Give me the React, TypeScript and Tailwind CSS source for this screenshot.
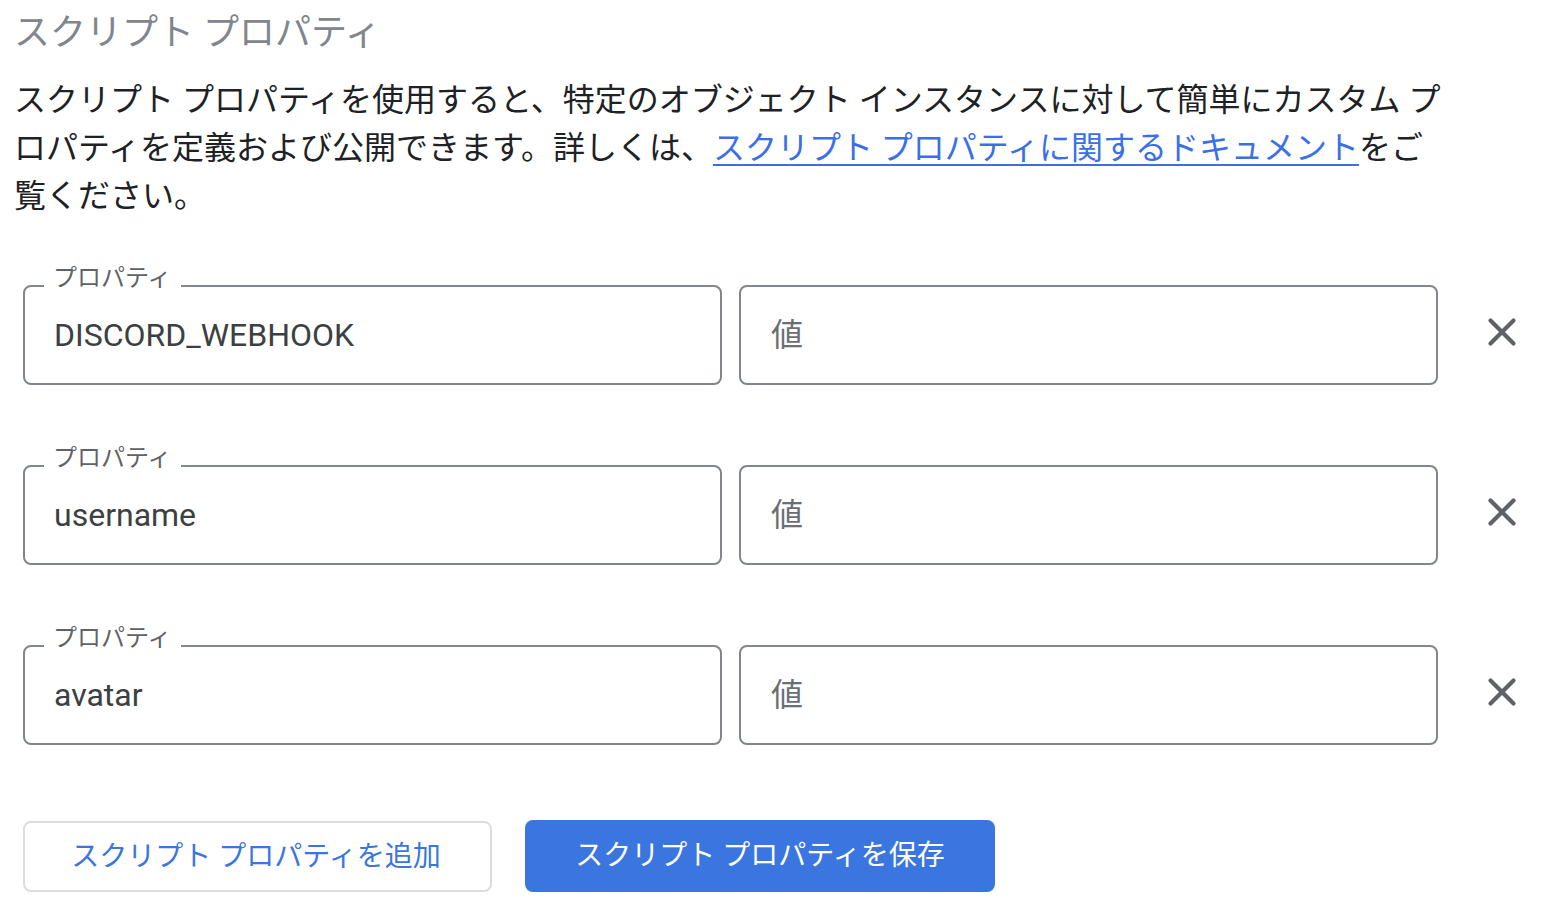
import { X } from "lucide-react";

const rows = ["DISCORD_WEBHOOK", "username", "avatar"];

const PropertyRow = ({ name }: { name: string }) => {
  return (
    <div className="flex items-center">
      <div className="relative w-[699px] h-[100px] border-2 border-[#80868b] rounded-[8px] flex items-center pl-[29px]">
        <span className="absolute top-[-21px] left-[19px] px-[9px] bg-white text-[24px] leading-[24px] text-[#5f6368]">
          プロパティ
        </span>
        <span className="text-[32px] text-[#3c4043]">{name}</span>
      </div>
      <div className="ml-[17px] w-[699px] h-[100px] border-2 border-[#80868b] rounded-[8px] flex items-center pl-[30px]">
        <span className="text-[32px] text-[#6b6f74]">値</span>
      </div>
      <button className="ml-[36px] w-[56px] h-[56px] flex items-center justify-center text-[#5f6368] mt-[-6px]">
        <X size={46} strokeWidth={2.2} />
      </button>
    </div>
  );
};

export default function App() {
  return (
    <div
      className="bg-white min-h-[924px] pl-[14px] pt-[11px]"
      style={{ fontFamily: 'Roboto, "Noto Sans CJK JP", sans-serif' }}
    >
      <h1 className="text-[36px] leading-[44px] text-[#80868b] font-normal">
        スクリプト プロパティ
      </h1>
      <p className="mt-[21px] w-[1434px] text-[32px] leading-[48px] text-[#202124]">
        スクリプト プロパティを使用すると、特定のオブジェクト インスタンスに対して簡単にカスタム プロパティを定義および公開できます。詳しくは、
        <a href="#" className="text-[#3b6fe6] underline decoration-2 underline-offset-[5px]">
          スクリプト プロパティに関するドキュメント
        </a>
        をご覧ください。
      </p>
      <div className="mt-[65px] pl-[9px] flex flex-col gap-[80px]">
        {rows.map((r) => (
          <PropertyRow key={r} name={r} />
        ))}
      </div>
      <div className="mt-[76px] pl-[9px] flex gap-[33px]">
        <button className="w-[469px] h-[71px] border-2 border-[#dadce0] rounded-[8px] text-[28px] text-[#3a75e0] pr-[3px]">
          スクリプト プロパティを追加
        </button>
        <button className="w-[470px] h-[72px] mt-[-1px] bg-[#3a75e0] rounded-[8px] text-[28px] text-white">
          スクリプト プロパティを保存
        </button>
      </div>
    </div>
  );
}
